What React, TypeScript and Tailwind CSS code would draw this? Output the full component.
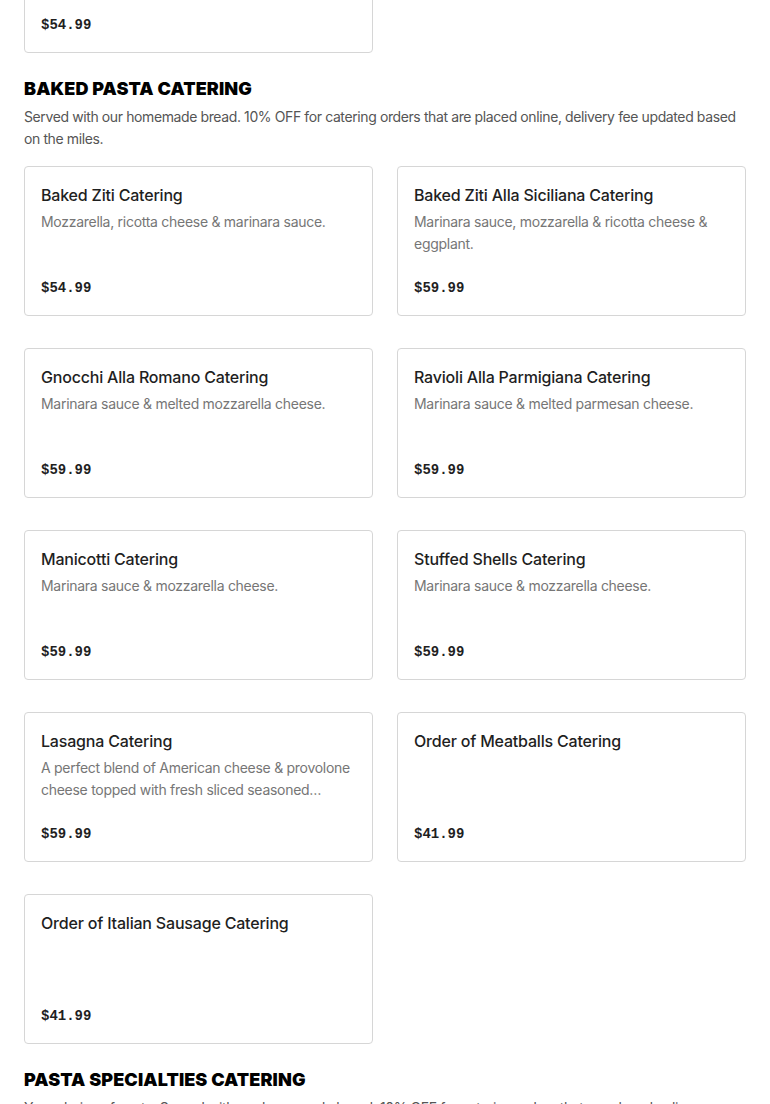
const bakedPasta = [
  {
    name: "Baked Ziti Catering",
    description: "Mozzarella, ricotta cheese & marinara sauce.",
    price: "$54.99",
  },
  {
    name: "Baked Ziti Alla Siciliana Catering",
    description: "Marinara sauce, mozzarella & ricotta cheese & eggplant.",
    price: "$59.99",
  },
  {
    name: "Gnocchi Alla Romano Catering",
    description: "Marinara sauce & melted mozzarella cheese.",
    price: "$59.99",
  },
  {
    name: "Ravioli Alla Parmigiana Catering",
    description: "Marinara sauce & melted parmesan cheese.",
    price: "$59.99",
  },
  {
    name: "Manicotti Catering",
    description: "Marinara sauce & mozzarella cheese.",
    price: "$59.99",
  },
  {
    name: "Stuffed Shells Catering",
    description: "Marinara sauce & mozzarella cheese.",
    price: "$59.99",
  },
  {
    name: "Lasagna Catering",
    description:
      "A perfect blend of American cheese & provolone cheese topped with fresh sliced seasoned meatballs & marinara sauce.",
    price: "$59.99",
  },
  {
    name: "Order of Meatballs Catering",
    description: "",
    price: "$41.99",
  },
  {
    name: "Order of Italian Sausage Catering",
    description: "",
    price: "$41.99",
  },
];

type Item = { name: string; description: string; price: string };

function MenuCard({ item }: { item: Item }) {
  return (
    <div className="flex h-[150px] flex-col rounded-[4px] border border-[#d6d6d6] bg-white p-4">
      <h3 className="text-[16px] leading-6 font-medium tracking-[-0.012em] text-[#1f1f1f]">
        {item.name}
      </h3>
      {item.description ? (
        <p className="mt-[4px] line-clamp-2 text-[14px] leading-[22px] tracking-[-0.02em] text-[#767676]">
          {item.description}
        </p>
      ) : null}
      <p className="mt-auto font-['Liberation_Mono',monospace] text-[14px] leading-[22px] font-bold text-[#1f1f1f]">
        {item.price}
      </p>
    </div>
  );
}

function SectionHeader({ title, text }: { title: string; text: string }) {
  return (
    <div className="mt-6">
      <h2 className="text-[18px] leading-6 font-black tracking-[0.006em] text-black">{title}</h2>
      <p className="mt-[5px] text-[14px] leading-[22px] tracking-[-0.028em] text-[#555555]">{text}</p>
    </div>
  );
}

export default function App() {
  return (
    <div className="h-[1104px] overflow-hidden bg-white font-['Inter','Noto_Sans',sans-serif]">
      <div className="-mt-[97px] px-6">
        <div className="grid grid-cols-2 gap-x-6">
          <MenuCard
            item={{
              name: "Spaghetti Catering",
              description: "Marinara sauce.",
              price: "$54.99",
            }}
          />
        </div>

        <SectionHeader
          title="BAKED PASTA CATERING"
          text="Served with our homemade bread. 10% OFF for catering orders that are placed online, delivery fee updated based on the miles."
        />
        <div className="mt-4 grid grid-cols-2 gap-x-6 gap-y-8">
          {bakedPasta.map((item) => (
            <MenuCard key={item.name} item={item} />
          ))}
        </div>

        <SectionHeader
          title="PASTA SPECIALTIES CATERING"
          text="Your choice of pasta. Served with our homemade bread. 10% OFF for catering orders that are placed online, delivery fee updated based on the miles."
        />
      </div>
    </div>
  );
}
